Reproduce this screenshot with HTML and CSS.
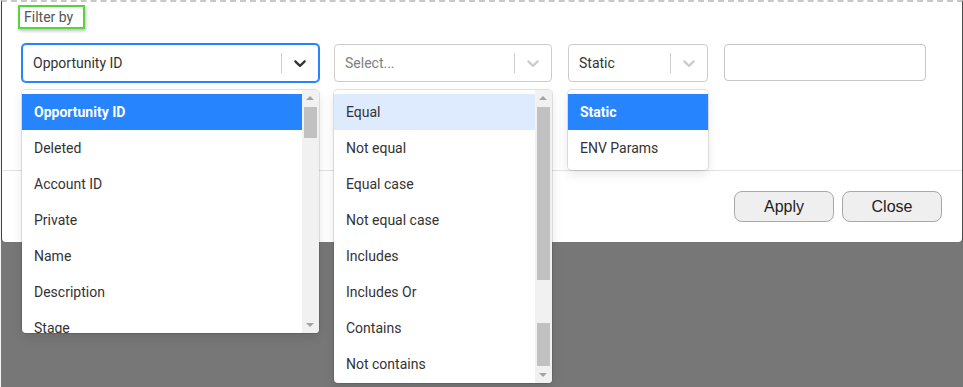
FILE: index.html
```html
<!DOCTYPE html>
<html lang="en">
<head>
    <meta charset="UTF-8">
    <meta name="viewport" content="width=device-width, initial-scale=1.0">
    <title>Filter by</title>
    <link rel="stylesheet" href="styles.css">
</head>
<body>
    <div class="panel">
        <div class="panel-body">
            <div class="filter-label">Filter by</div>
            <div class="filter-row">
                <div class="select field-select">
                    <div class="select-control focused">
                        <div class="select-value">Opportunity ID</div>
                        <span class="select-sep"></span>
                        <span class="select-arrow dark">
                            <svg width="20" height="20" viewBox="0 0 20 20"><path d="M4.516 7.548c.436-.446 1.043-.481 1.576 0L10 11.295l3.908-3.747c.533-.481 1.141-.446 1.574 0 .436.445.408 1.197 0 1.615-.406.418-4.695 4.502-4.695 4.502a1.095 1.095 0 0 1-1.576 0S4.924 9.581 4.516 9.163s-.436-1.17 0-1.615z"/></svg>
                        </span>
                    </div>
                    <div class="menu menu-fields">
                        <div class="menu-list">
                            <div class="option selected">Opportunity ID</div>
                            <div class="option">Deleted</div>
                            <div class="option">Account ID</div>
                            <div class="option">Private</div>
                            <div class="option">Name</div>
                            <div class="option">Description</div>
                            <div class="option">Stage</div>
                        </div>
                        <div class="scrollbar">
                            <span class="sb-up"></span>
                            <span class="sb-thumb thumb-short"></span>
                            <span class="sb-track"></span>
                            <span class="sb-down"></span>
                        </div>
                    </div>
                </div>

                <div class="select operator-select">
                    <div class="select-control">
                        <div class="select-value placeholder">Select...</div>
                        <span class="select-sep"></span>
                        <span class="select-arrow">
                            <svg width="20" height="20" viewBox="0 0 20 20"><path d="M4.516 7.548c.436-.446 1.043-.481 1.576 0L10 11.295l3.908-3.747c.533-.481 1.141-.446 1.574 0 .436.445.408 1.197 0 1.615-.406.418-4.695 4.502-4.695 4.502a1.095 1.095 0 0 1-1.576 0S4.924 9.581 4.516 9.163s-.436-1.17 0-1.615z"/></svg>
                        </span>
                    </div>
                    <div class="menu menu-operators">
                        <div class="menu-list">
                            <div class="option focused">Equal</div>
                            <div class="option">Not equal</div>
                            <div class="option">Equal case</div>
                            <div class="option">Not equal case</div>
                            <div class="option">Includes</div>
                            <div class="option">Includes Or</div>
                            <div class="option">Contains</div>
                            <div class="option">Not contains</div>
                        </div>
                        <div class="scrollbar">
                            <span class="sb-up"></span>
                            <span class="sb-thumb thumb-long"></span>
                            <span class="sb-gap"></span>
                            <span class="sb-thumb thumb-end"></span>
                            <span class="sb-down"></span>
                        </div>
                    </div>
                </div>

                <div class="select type-select">
                    <div class="select-control">
                        <div class="select-value">Static</div>
                        <span class="select-sep"></span>
                        <span class="select-arrow">
                            <svg width="20" height="20" viewBox="0 0 20 20"><path d="M4.516 7.548c.436-.446 1.043-.481 1.576 0L10 11.295l3.908-3.747c.533-.481 1.141-.446 1.574 0 .436.445.408 1.197 0 1.615-.406.418-4.695 4.502-4.695 4.502a1.095 1.095 0 0 1-1.576 0S4.924 9.581 4.516 9.163s-.436-1.17 0-1.615z"/></svg>
                        </span>
                    </div>
                    <div class="menu menu-types">
                        <div class="menu-list">
                            <div class="option selected">Static</div>
                            <div class="option">ENV Params</div>
                        </div>
                    </div>
                </div>

                <input type="text" class="value-input">
            </div>
        </div>
        <div class="panel-footer">
            <button class="btn">Apply</button>
            <button class="btn">Close</button>
        </div>
    </div>
    <div class="backdrop"></div>
</body>
</html>
```

FILE: styles.css
```css
html {
    height: 100%;
}
body {
    margin: 0;
    min-height: 100%;
    display: flex;
    flex-direction: column;
    background-color: #777777;
    font-family: Roboto, "Liberation Sans", Arial, sans-serif;
    font-size: 14px;
    color: #333333;
    border-left: 1px solid #f4f4f4;
}
.panel {
    position: relative;
    z-index: 2;
    background-color: #ffffff;
    border-top: 2px dashed #c8c8c8;
    border-left: 1px solid #34454f;
    border-right: 1px solid #4a4a4a;
    border-radius: 0 0 4px 4px;
}
.backdrop {
    flex: 1;
    min-height: 145px;
    background-color: #777777;
}
.panel-body {
    height: 168px;
    box-sizing: border-box;
    padding: 3px 0 0 15px;
}
.filter-label {
    display: inline-block;
    border: 2px solid #55d43c;
    padding: 3px 10px 2px 4px;
    font-size: 14px;
    line-height: 15px;
    color: #555555;
    box-shadow: 1px 2px 3px rgba(0, 0, 0, 0.25);
    margin-left: 1px;
}
.filter-row {
    display: flex;
    align-items: flex-start;
    margin-top: 15px;
    margin-left: 5px;
}
.select {
    position: relative;
    margin-right: 16px;
}
.field-select { width: 297px; margin-right: 15px; }
.operator-select { width: 218px; }
.type-select { width: 140px; }
.select-control {
    display: flex;
    align-items: center;
    height: 38px;
    box-sizing: border-box;
    border: 1px solid #cccccc;
    border-radius: 4px;
    background-color: #ffffff;
}
.select-control.focused {
    border-color: #2684ff;
    box-shadow: 0 0 0 1px #2684ff;
}
.select-value {
    flex: 1;
    padding: 0 10px;
    white-space: nowrap;
    overflow: hidden;
}
.select-value.placeholder {
    color: #808080;
}
.select-sep {
    width: 1px;
    height: 20px;
    background-color: #cccccc;
}
.select-arrow {
    display: flex;
    padding: 8px;
    fill: #cccccc;
}
.select-arrow.dark {
    fill: #333333;
}
.menu {
    position: absolute;
    z-index: 5;
    top: 46px;
    left: 0;
    right: 0;
    display: flex;
    background-color: #ffffff;
    border-radius: 4px;
    overflow: hidden;
    box-shadow: 0 0 0 1px rgba(0, 0, 0, 0.1), 0 4px 11px rgba(0, 0, 0, 0.1);
}
.menu-fields { height: 243px; }
.menu-operators { height: 293px; }
.menu-list {
    flex: 1;
    padding: 4px 0;
    overflow: hidden;
}
.option {
    height: 36px;
    line-height: 36px;
    padding: 0 12px;
    white-space: nowrap;
}
.option.selected {
    background-color: #2684ff;
    color: #ffffff;
    font-weight: bold;
}
.option.focused {
    background-color: #deebff;
}
.scrollbar {
    width: 17px;
    display: flex;
    flex-direction: column;
    align-items: center;
    background-color: #f1f1f1;
}
.sb-up,
.sb-down {
    position: relative;
    height: 17px;
    width: 100%;
    flex-shrink: 0;
}
.sb-up::after,
.sb-down::after {
    content: "";
    position: absolute;
    left: 4px;
    border-left: 4px solid transparent;
    border-right: 4px solid transparent;
}
.sb-up::after {
    top: 6px;
    border-bottom: 4px solid #a3a3a3;
}
.sb-down::after {
    top: 7px;
    border-top: 4px solid #a3a3a3;
}
.sb-thumb {
    width: 13px;
    background-color: #c1c1c1;
    flex-shrink: 0;
}
.thumb-short { height: 31px; }
.thumb-long { height: 173px; }
.thumb-end { height: 43px; }
.sb-gap { height: 43px; flex-shrink: 0; }
.sb-track { flex: 1; }
.value-input {
    width: 202px;
    height: 37px;
    box-sizing: border-box;
    border: 1px solid #c6c6c6;
    border-radius: 4px;
    outline: none;
}
.panel-footer {
    display: flex;
    justify-content: flex-end;
    height: 72px;
    box-sizing: border-box;
    border-top: 1px solid #e3e3e3;
    padding: 20px 20px 0 0;
}
.btn {
    width: 100px;
    height: 31px;
    margin-left: 8px;
    font-family: "Liberation Sans", Arial, sans-serif;
    font-size: 16px;
    color: #222222;
    background-color: #efefef;
    border: 1px solid #a9a9a9;
    border-radius: 8px;
}
```
